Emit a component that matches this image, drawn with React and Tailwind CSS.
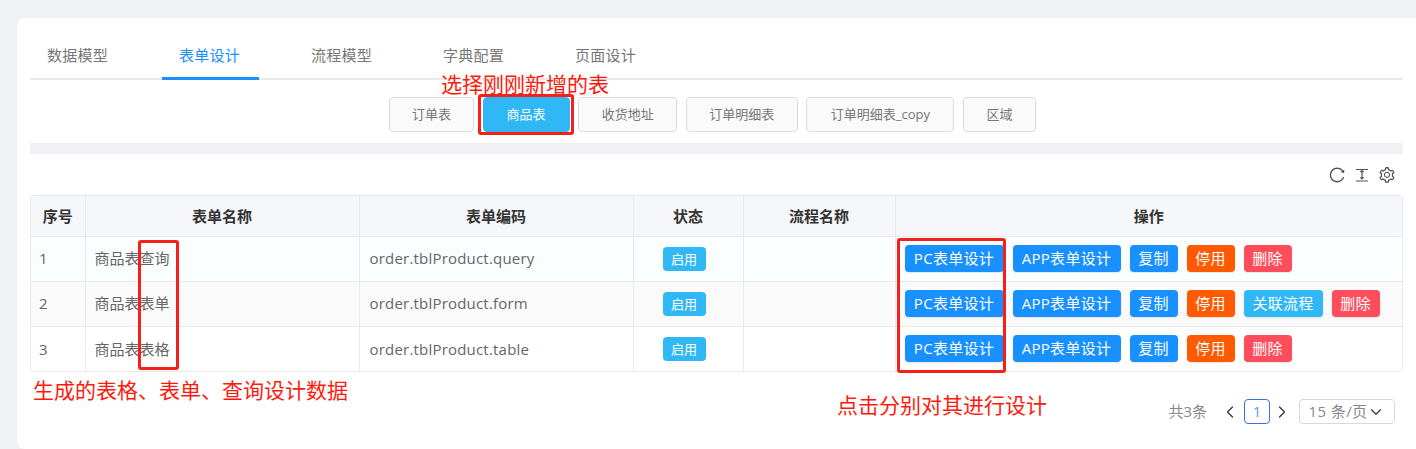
import { ChevronLeft, ChevronRight, ChevronDown } from 'lucide-react';
import { AiOutlineReload, AiOutlineSetting } from 'react-icons/ai';

const font = { fontFamily: '"Open Sans", "Noto Sans CJK SC", sans-serif' };

const tabs = ['数据模型', '表单设计', '流程模型', '字典配置', '页面设计'];
const forms = [
  { label: '订单表', w: 'w-[85px]' },
  { label: '商品表', w: 'w-[87px]', active: true },
  { label: '收货地址', w: 'w-[99px]' },
  { label: '订单明细表', w: 'w-[112px]' },
  { label: '订单明细表_copy', w: 'w-[148px]' },
  { label: '区域', w: 'w-[73px]' },
];
const rows = [
  { no: 1, name: '商品表查询', code: 'order.tblProduct.query', bg: 'bg-[#fbfefe]' },
  { no: 2, name: '商品表表单', code: 'order.tblProduct.form', bg: 'bg-[#fafafa]', link: true },
  { no: 3, name: '商品表表格', code: 'order.tblProduct.table', bg: 'bg-white' },
];

const Action = ({ color, w, children }) => (
  <button className={`${w} h-[27px] rounded-[4px] text-[15px] leading-[27px] tracking-[0.3px] text-white text-center shadow-[0_1px_2px_rgba(0,0,0,0.1)] whitespace-nowrap ${color}`}>
    {children}
  </button>
);

const Th = ({ w, children }) => (
  <th className={`${w} border-r border-b border-[#e8e9ed] text-[15px] font-bold text-[#333] text-center`}>{children}</th>
);

const Note = ({ className, children }) => (
  <div className={`absolute text-[21px] leading-[28px] text-[#ff1a0d] whitespace-nowrap ${className}`}>{children}</div>
);

const Box = ({ className }) => (
  <div className={`absolute border-[3px] border-[#f5201a] rounded-[3px] ${className}`} />
);

export default function App() {
  return (
    <div className="h-[449px] overflow-hidden bg-[#f0f1f5] pt-[18px] pl-[17px]" style={font}>
      <div className="relative h-[431px] bg-white rounded-tl-[8px] rounded-bl-[8px] px-[13px] pt-[19px]">
        {/* Tabs */}
        <div className="flex gap-[35px] h-[43px] border-b-2 border-[#eaeaea]">
          {tabs.map((t, i) => (
            <div key={t} className={`w-[97px] h-[43px] pr-[2px] text-center text-[15px] leading-[36px] tracking-[0.25px] ${i === 1 ? 'text-[#1890ff] border-b-[3px] border-[#1890ff]' : 'text-[#777]'}`}>
              {t}
            </div>
          ))}
        </div>

        {/* Form picker */}
        <div className="flex justify-center gap-[8.6px] pt-[17px] pr-[8px]">
          {forms.map((f) => (
            <button key={f.label} className={`${f.w} h-[35px] rounded-[4px] border text-[13px] ${f.active ? 'bg-[#2fb8f5] border-[#2fb8f5] text-white' : 'bg-[#fafafa] border-[#dcdcdc] text-[#777]'}`}>
              {f.label}
            </button>
          ))}
        </div>

        <div className="h-[11px] mt-[11px] bg-[#f0f1f5]" />

        {/* Toolbar */}
        <div className="flex justify-end items-center gap-[8px] h-[41px] pr-[7px] text-[#555]">
          <AiOutlineReload className="w-[18px] h-[18px]" />
          <svg width="16" height="16" viewBox="0 0 16 16" fill="none" stroke="currentColor" strokeWidth="1.2">
            <path d="M2 2.5h12M2 14h12M8 3.5v8.5M6.4 5.2 8 3.6l1.6 1.6M6.4 10.4 8 12l1.6-1.6" />
          </svg>
          <AiOutlineSetting className="w-[18px] h-[18px]" />
        </div>

        {/* Table */}
        <div className="border border-[#e8e9ed] rounded-[4px] overflow-hidden">
          <table className="w-full table-fixed border-collapse">
            <thead>
              <tr className="h-[40px] bg-[#f6f7fb]">
                <Th w="w-[54px]">序号</Th>
                <Th w="w-[274px]">表单名称</Th>
                <Th w="w-[274px]">表单编码</Th>
                <Th w="w-[110px]">状态</Th>
                <Th w="w-[152px]">流程名称</Th>
                <th className="border-b border-[#e8e9ed] text-[15px] font-bold text-[#333] text-center">操作</th>
              </tr>
            </thead>
            <tbody className="text-[15px] text-[#666]">
              {rows.map((r) => (
                <tr key={r.no} className={`h-[45px] ${r.bg} border-b border-[#e8e9ed] last:border-b-0`}>
                  <td className="border-r border-[#e8e9ed] pl-[8px]">{r.no}</td>
                  <td className="border-r border-[#e8e9ed] pl-[9px]">{r.name}</td>
                  <td className="border-r border-[#e8e9ed] pl-[10px] tracking-[0.2px]">{r.code}</td>
                  <td className="border-r border-[#e8e9ed] pl-[29px]">
                    <span className="inline-block h-[24px] px-[8.5px] rounded-[4px] bg-[#2fb8f5] text-white text-[13px] leading-[24px]">启用</span>
                  </td>
                  <td className="border-r border-[#e8e9ed]" />
                  <td className="pl-[9px]">
                    <div className="flex gap-[9px]">
                      <Action w="w-[99px]" color="bg-[#1890ff]">PC表单设计</Action>
                      <Action w="w-[108px]" color="bg-[#1890ff]">APP表单设计</Action>
                      <Action w="w-[48px]" color="bg-[#1890ff]">复制</Action>
                      <Action w="w-[48px]" color="bg-[#ff5a00]">停用</Action>
                      {r.link && <Action w="w-[79px]" color="bg-[#2fb8f5]">关联流程</Action>}
                      <Action w="w-[48px]" color="bg-[#ff4d5b]">删除</Action>
                    </div>
                  </td>
                </tr>
              ))}
            </tbody>
          </table>
        </div>

        {/* Pagination */}
        <div className="flex justify-end items-center h-[25px] mt-[27px] pr-[8px] text-[15px] text-[#888]">
          <span>共3条</span>
          <ChevronLeft strokeWidth={1.5} className="w-[20px] h-[20px] ml-[13px] mr-[4px] text-[#333]" />
          <span className="w-[26px] h-[25px] rounded-[4px] border border-[#3b6fe0] text-center leading-[23px] text-[#5b9cf5]">1</span>
          <ChevronRight strokeWidth={1.5} className="w-[20px] h-[20px] ml-[2px] mr-[7px] text-[#333]" />
          <span className="flex items-center justify-center w-[96px] h-[25px] rounded-[4px] border border-[#d9d9d9] tracking-[0.4px]">
            15 条/页 <ChevronDown strokeWidth={1.5} className="w-[18px] h-[18px] text-[#333]" />
          </span>
        </div>

        {/* Annotations */}
        <Note className="left-[424px] top-[52px]">选择刚刚新增的表</Note>
        <Box className="left-[461px] top-[76px] w-[96px] h-[41px]" />
        <Box className="left-[121px] top-[222px] w-[41px] h-[130px]" />
        <Box className="left-[880px] top-[220px] w-[109px] h-[135px]" />
        <Note className="left-[16px] top-[358px]">生成的表格、表单、查询设计数据</Note>
        <Note className="left-[820px] top-[373px]">点击分别对其进行设计</Note>
      </div>
    </div>
  );
}
